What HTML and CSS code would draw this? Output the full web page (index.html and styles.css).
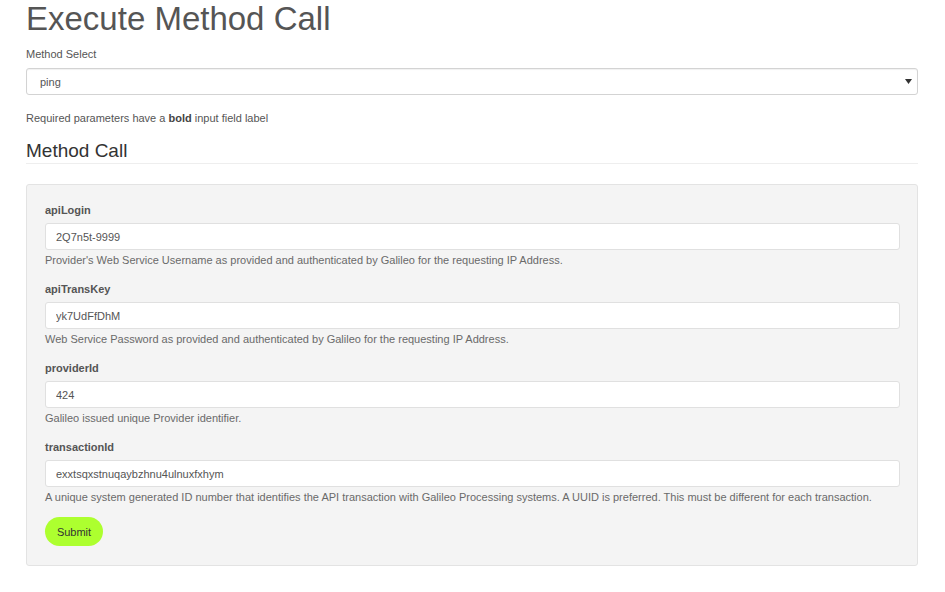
FILE: index.html
```html
<!DOCTYPE html>
<html>
<head>
<meta charset="utf-8">
<link rel="stylesheet" href="styles.css">
</head>
<body>
<div class="page">
  <h1 class="title">Execute Method Call</h1>
  <label class="top-label" for="method">Method Select</label>
  <div class="select-wrap">
    <select id="method" class="select"><option>ping</option></select>
    <svg class="arrow" width="7" height="5" viewBox="0 0 7 5"><path d="M0 0H7L3.5 5Z" fill="#333"/></svg>
  </div>
  <p class="note">Required parameters have a <b>bold</b> input field label</p>
  <h3 class="section">Method Call</h3>
  <form class="well">
    <div class="group">
      <label class="field-label">apiLogin</label>
      <input class="field" type="text" value="2Q7n5t-9999">
      <p class="help">Provider's Web Service Username as provided and authenticated by Galileo for the requesting IP Address.</p>
    </div>
    <div class="group">
      <label class="field-label">apiTransKey</label>
      <input class="field" type="text" value="yk7UdFfDhM">
      <p class="help">Web Service Password as provided and authenticated by Galileo for the requesting IP Address.</p>
    </div>
    <div class="group">
      <label class="field-label">providerId</label>
      <input class="field" type="text" value="424">
      <p class="help">Galileo issued unique Provider identifier.</p>
    </div>
    <div class="group">
      <label class="field-label">transactionId</label>
      <input class="field" type="text" value="exxtsqxstnuqaybzhnu4ulnuxfxhym">
      <p class="help">A unique system generated ID number that identifies the API transaction with Galileo Processing systems. A UUID is preferred. This must be different for each transaction.</p>
    </div>
    <button class="submit" type="button">Submit</button>
  </form>
</div>
</body>
</html>
```

FILE: styles.css
```css
* { box-sizing: border-box; }
html, body { margin: 0; padding: 0; background: #fff; }
body {
  font-family: "Liberation Sans", Arial, sans-serif;
  font-size: 11px;
  line-height: 16px;
  color: #555;
}
.page {
  width: 892px;
  margin-left: 26px;
  padding-top: 1px;
  display: flex;
  flex-direction: column;
}
.title {
  margin: 0;
  font-size: 33px;
  line-height: 36px;
  font-weight: normal;
  color: #555;
}
.top-label {
  display: block;
  margin-top: 9px;
  margin-bottom: 6px;
  color: #555;
}
.select-wrap {
  position: relative;
  height: 27px;
}
.select {
  appearance: none;
  -webkit-appearance: none;
  width: 100%;
  height: 27px;
  margin: 0;
  padding: 0 13px;
  border: 1px solid #d3d3d3;
  border-radius: 3px;
  background: #fff;
  box-shadow: inset 0 1px 1px rgba(0,0,0,0.06);
  font-family: inherit;
  font-size: 11px;
  color: #555;
  outline: none;
}
.arrow {
  position: absolute;
  right: 6px;
  top: 11px;
}
.note {
  margin: 15px 0 0;
  color: #555;
}
.note b { color: #444; }
.section {
  margin: 14px 0 0;
  padding-bottom: 2px;
  border-bottom: 1px solid #eee;
  font-size: 19px;
  line-height: 21px;
  font-weight: normal;
  color: #333;
}
.well {
  margin: 20px 0 0;
  padding: 17px 17px 19px 18px;
  background: #f4f4f4;
  border: 1px solid #e3e3e3;
  border-radius: 3px;
  display: flex;
  flex-direction: column;
  align-items: stretch;
}
.group {
  display: flex;
  flex-direction: column;
  margin-bottom: 13px;
}
.group:last-of-type { margin-bottom: 12px; }
.field-label {
  font-weight: bold;
  color: #555;
  margin-bottom: 5px;
}
.field {
  height: 27px;
  margin: 0;
  padding: 0 10px;
  border: 1px solid #e0e0e0;
  border-radius: 3px;
  background: #fff;
  font-family: inherit;
  font-size: 11px;
  color: #555;
  outline: none;
}
.help {
  margin: 2px 0 0;
  color: #6a6a6a;
}
.submit {
  align-self: flex-start;
  width: 58px;
  height: 29px;
  padding: 0;
  border: none;
  border-radius: 15px;
  background: #adff2f;
  font-family: inherit;
  font-size: 11px;
  color: #333;
  cursor: pointer;
}
```
